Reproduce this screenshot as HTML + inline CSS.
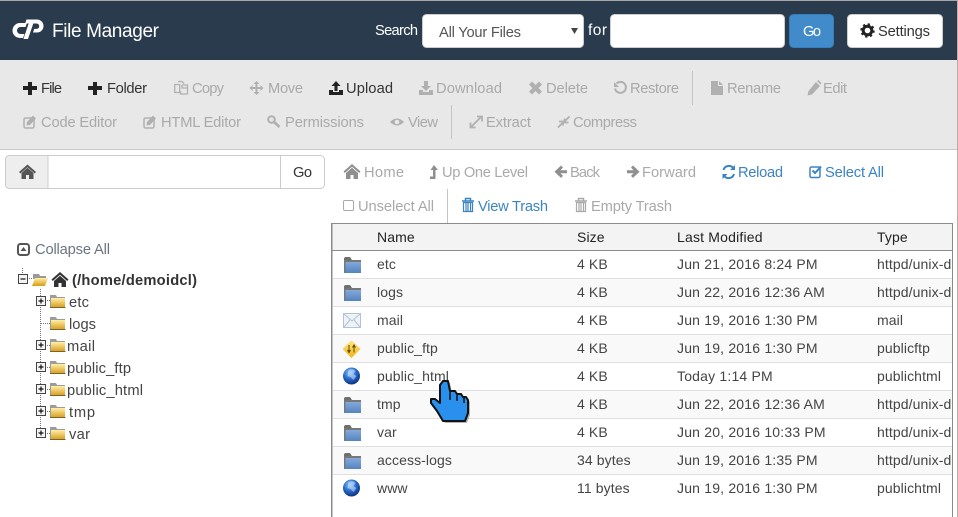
<!DOCTYPE html>
<html><head><meta charset="utf-8"><title>File Manager</title>
<style>
html,body{margin:0;padding:0;background:#fff;width:958px;height:517px;overflow:hidden}
svg{display:block}
text{font-family:"Liberation Sans",sans-serif;font-size:14px}
text[textLength]{font-size:14.7px}
.d{fill:#a9a9a9}.a{fill:#333}.b{fill:#3a83c4}.g{fill:#8f8f8f}
.t{fill:#444}
.i{fill:#b0b0b0}.ia{fill:#222}
.c1 text{letter-spacing:.1px}
.c3 text{letter-spacing:.19px}
</style></head><body>
<svg width="958" height="517" viewBox="0 0 958 517" xmlns="http://www.w3.org/2000/svg">
<defs>
<linearGradient id="fy" x1="0" y1="0" x2="0" y2="1"><stop offset="0" stop-color="#fff0a8"/><stop offset="1" stop-color="#d69a14"/></linearGradient>
<linearGradient id="fb" x1="0" y1="0" x2="0" y2="1"><stop offset="0" stop-color="#84a9da"/><stop offset="1" stop-color="#5583bf"/></linearGradient>
<radialGradient id="gl" cx=".4" cy=".3" r=".8"><stop offset="0" stop-color="#8cc4fa"/><stop offset=".5" stop-color="#2466c8"/><stop offset="1" stop-color="#0a2468"/></radialGradient>
<linearGradient id="dm" x1="0" y1="0" x2="0" y2="1"><stop offset="0" stop-color="#ffe98a"/><stop offset="1" stop-color="#f2b416"/></linearGradient>
<g id="tf">
<path d="M0 2 q0-2 2-2 h4 l2 3 h8 v3 h-16z" fill="#6f6f6f"/>
<rect x="0" y="3" width="17" height="13" fill="#777"/>
<rect x="1.500" y="5" width="15.500" height="11" fill="url(#fb)"/>
</g>
<g id="yf">
<path d="M0 0 h6 l1 2 h8 v11 h-15z" fill="#9c9c9c"/>
<rect x="1" y="3" width="14" height="10" fill="url(#fy)"/>
<rect x="0" y="12" width="15.500" height="1" fill="#7a6330"/>
</g>
<g id="pb">
<rect x=".5" y=".5" width="9" height="9" fill="#f4f4f4" stroke="#444"/>
<path d="M2.500 5h5M5 2.500v5" stroke="#111" stroke-width="1.200"/>
</g>
<g id="globe">
<circle cx="0" cy="0" r="8.500" fill="url(#gl)"/>
<path d="M-3-6 q5-2 7 1 l-2 3 l3 2 l-3 4 l-3-3 l-3-1 z" fill="#cfe6fb" opacity=".55"/>
</g>
</defs>

<rect width="958" height="517" fill="#fff"/>
<rect x="0" y="1" width="958" height="59" fill="#2a3b4d"/>
<rect x="0" y="0" width="958" height="1" fill="#a8a8a8"/>
<rect x="0" y="60" width="958" height="89" fill="#e8e8e8"/>
<rect x="0" y="149" width="958" height="1" fill="#c8c8c8"/>
<rect x="957" y="0" width="1" height="517" fill="#c9a8a0"/>

<!-- logo -->
<path fill="#fff" d="M27 23 h-7 a7.500 7.500 0 0 0 0 15 h3 l1.500-4 h-4 a3.500 3.500 0 0 1 0-7 h5z"/>
<path fill="#fff" d="M26.500 19.500 h10.500 a6.300 6.300 0 0 1 0 13 h-4 l1.300-3.600 h2.200 a2.600 2.600 0 0 0 0-5.400 h-3.200 l-5.300 15.500 h-4.600 l5.300-15.500 h-3.600z"/>
<text x="52" y="37" textLength="107" style="font-size:19px" fill="#fff">File Manager</text>
<text x="375" y="35" textLength="43" fill="#fff">Search</text>
<rect x="422.500" y="14.500" width="161" height="33" rx="4" fill="#fff" stroke="#ccc"/>
<text x="439" y="37" textLength="82" fill="#555">All Your Files</text>
<path d="M571 28h7l-3.500 6z" fill="#444"/>
<text x="588" y="35" textLength="19" fill="#fff" style="font-size:15.500px">for</text>
<rect x="610.500" y="14.500" width="174" height="33" rx="4" fill="#fff" stroke="#ccc"/>
<rect x="789.500" y="14.500" width="44" height="33" rx="4" fill="#428bca" stroke="#357ebd"/>
<text x="803" y="36" textLength="18" fill="#fff">Go</text>
<rect x="847.500" y="14.500" width="95" height="33" rx="4" fill="#fff" stroke="#ccc"/>
<circle cx="867.500" cy="30.500" r="4.300" fill="none" stroke="#222" stroke-width="3"/>
<circle cx="867.500" cy="30.500" r="6.300" fill="none" stroke="#222" stroke-width="1.800" stroke-dasharray="2.300 2.650"/>
<text x="878" y="36" textLength="52" fill="#333">Settings</text>

<!-- toolbar row 1 -->
<path d="M28 82h4v4h5v4h-5v5h-4v-5h-5v-4h5z" fill="#222"/>
<text x="41" y="93" textLength="21" class="a">File</text>
<path d="M93 82h4v4h5v4h-5v5h-4v-5h-5v-4h5z" fill="#222"/>
<text x="107" y="93" textLength="40" class="a">Folder</text>
<g fill="none" stroke="#b0b0b0" stroke-width="1.300"><path d="M174.700 84.500h5v8h-5zM178 81.500h4l2 2M182 85h5.500v9h-7v-3M182 85v3h5"/></g>
<text x="192" y="93" textLength="32" class="d">Copy</text>
<path class="i" d="M256.500 81l3 3h-2v3h3v-2l3 3-3 3v-2h-3v3h2l-3 3-3-3h2v-3h-3v2l-3-3 3-3v2h3v-3h-2z"/>
<text x="268" y="93" textLength="35" class="d">Move</text>
<path d="M336 81l4.500 5h-3v5h-3v-5h-3zM329 90h4v2h6v-2h4v5h-14z" fill="#222"/>
<text x="346" y="93" textLength="47" class="a">Upload</text>
<path class="i" d="M424 81h4v5h3l-5 5-5-5h3zM419 90h4v2h6v-2h4v5h-14z"/>
<text x="436" y="93" textLength="66" class="d">Download</text>
<path class="i" d="M532 81.500l3.500 3.500 3.500-3.500 3 3-3.500 3.500 3.500 3.500-3 3-3.500-3.500-3.500 3.500-3-3 3.500-3.500-3.500-3.500z"/>
<text x="546" y="93" textLength="42" class="d">Delete</text>
<path d="M616.500 83.500a5.500 5.500 0 1 1 -1.500 5" fill="none" stroke="#b0b0b0" stroke-width="2"/><path class="i" d="M614 82v5h5z"/>
<text x="630" y="93" textLength="49" class="d">Restore</text>
<rect x="692" y="71" width="1" height="34" fill="#c4c4c4"/>
<path class="i" d="M711 81h7v5h5v9h-12zM719 81l4 4h-4z"/>
<text x="727" y="93" textLength="54" class="d">Rename</text>
<path class="i" d="M816 82l4 4-8 8.500-4.500 1 1-4.500zM817 81l1.500-1 3 3-1 1.500z"/>
<text x="823" y="93" textLength="24" class="d">Edit</text>

<!-- toolbar row 2 -->
<g><rect x="24" y="118" width="10" height="10" rx="1.500" fill="none" stroke="#b0b0b0" stroke-width="1.500"/><path class="i" d="M33 115.500l3 3-6 6.500-3.500.5.500-3.500z"/></g>
<text x="41" y="127" textLength="76" class="d">Code Editor</text>
<g transform="translate(120,0)"><rect x="24" y="118" width="10" height="10" rx="1.500" fill="none" stroke="#b0b0b0" stroke-width="1.500"/><path class="i" d="M33 115.500l3 3-6 6.500-3.500.5.500-3.500z"/></g>
<text x="161" y="127" textLength="80" class="d">HTML Editor</text>
<circle cx="271.500" cy="119.500" r="3.300" fill="none" stroke="#b0b0b0" stroke-width="2"/><path d="M274 122l5.500 5" stroke="#b0b0b0" stroke-width="2.600"/>
<text x="285" y="127" textLength="79" class="d">Permissions</text>
<path class="i" d="M390 122q7-7 14 0q-7 7-14 0z"/><circle cx="397" cy="122" r="2.300" fill="#e8e8e8"/>
<text x="408" y="127" textLength="30" class="d">View</text>
<rect x="451" y="105" width="1" height="34" fill="#c4c4c4"/>
<path d="M471 127l10-10M477 116.500h5v5M470.500 122.500v5h5" fill="none" stroke="#b0b0b0" stroke-width="1.800"/>
<text x="486" y="127" textLength="45" class="d">Extract</text>
<path d="M558 127.500l4.500-4.500M569.500 116.500l-4.500 4.500M559 121.500h4v4M568.500 122.500h-4v-4" fill="none" stroke="#b0b0b0" stroke-width="1.800"/>
<text x="573" y="127" textLength="64" class="d">Compress</text>

<!-- path box -->
<rect x="5.500" y="155.500" width="319" height="33" rx="4" fill="#fff" stroke="#ccc"/>
<path d="M9.500 155.500h38.500v33h-38.500a4 4 0 0 1-4-4v-25a4 4 0 0 1 4-4z" fill="#eee" stroke="#ccc"/>
<rect x="280" y="156" width="1" height="32" fill="#ccc"/>
<path d="M27.500 164.500l8.500 7.500-1.300 1.500-7.200-6.300-7.200 6.300-1.300-1.500zM21.500 173l6-5.200 6 5.200v6h-4.500v-4h-3v4h-4.500z" fill="#555"/>
<text x="293" y="177" textLength="19" class="a">Go</text>

<!-- collapse -->
<rect x="18" y="244" width="11" height="11" rx="2.500" fill="none" stroke="#555" stroke-width="2"/>
<path d="M23.500 247l3 4h-6z" fill="#555"/>
<text x="35" y="254" textLength="75" fill="#6b7580">Collapse All</text>

<!-- tree -->
<path d="M22.500 268v6M27 278.500h5M40.500 289v143M45 300.500h5M41 323.500h9M45 345.500h5M45 367.500h5M45 389.500h5M45 411.500h5M45 433.500h5" fill="none" stroke="#777" stroke-dasharray="1 1"/>
<rect x="18.500" y="274.500" width="9" height="9" fill="#f4f4f4" stroke="#444"/><path d="M20.500 279h5" stroke="#111" stroke-width="1.200"/>
<path d="M33 274h6l1 2h6v3h-13z" fill="#999"/><path d="M35 278h13l-3 8h-13z" fill="url(#fy)"/>
<path d="M60 272l8.500 7.500-1.300 1.500-7.200-6.300-7.200 6.300-1.300-1.500zM54 281l6-5.200 6 5.200v6h-4.500v-4h-3v4h-4.500z" fill="#333"/>
<text x="72" y="285" textLength="125" font-weight="bold" fill="#333">(/home/demoidcl)</text>
<use href="#pb" x="36" y="296"/><use href="#yf" x="50" y="295"/><text x="69" y="307" textLength="20" class="t">etc</text>
<use href="#yf" x="50" y="317"/><text x="69" y="329" textLength="27" class="t">logs</text>
<use href="#pb" x="36" y="340"/><use href="#yf" x="50" y="339"/><text x="67" y="351" textLength="28" class="t">mail</text>
<use href="#pb" x="36" y="362"/><use href="#yf" x="50" y="361"/><text x="67" y="373" textLength="64" class="t">public_ftp</text>
<use href="#pb" x="36" y="384"/><use href="#yf" x="50" y="383"/><text x="67" y="395" textLength="76" class="t">public_html</text>
<use href="#pb" x="36" y="406"/><use href="#yf" x="50" y="405"/><text x="69" y="417" textLength="26" class="t">tmp</text>
<use href="#pb" x="36" y="428"/><use href="#yf" x="50" y="427"/><text x="69" y="439" textLength="21" class="t">var</text>

<!-- action row 1 -->
<path class="g" d="M352 164l8.500 7.500-1.300 1.500-7.200-6.300-7.200 6.300-1.300-1.500zM346 173l6-5.200 6 5.200v6h-4.500v-4h-3v4h-4.500z"/>
<text x="364" y="177" textLength="40" class="d">Home</text>
<path class="g" d="M434 165l4 5h-2.500v9h-5.500v-2.500h3v-6.500h-2.500z"/>
<text x="442" y="177" textLength="86" class="d">Up One Level</text>
<path class="g" d="M561 165.500l2 2-2.500 2.700h6.500v3h-6.500l2.500 2.700-2 2-6.500-6.200z"/>
<text x="570" y="177" textLength="30" class="d">Back</text>
<path class="g" d="M633 165.500l-2 2 2.500 2.700h-6.500v3h6.500l-2.500 2.700 2 2 6.500-6.200z"/>
<text x="642" y="177" textLength="54" class="d">Forward</text>
<path d="M723.500 170a5.500 5.500 0 0 1 10-1.500M734 174a5.500 5.500 0 0 1-10 1.500" fill="none" stroke="#3a83c4" stroke-width="2"/><path d="M735 165v5h-5zM722.500 179v-5h5z" fill="#3a83c4"/>
<text x="738" y="177" textLength="45" class="b">Reload</text>
<rect x="810" y="167" width="10" height="10.500" rx="1.500" fill="none" stroke="#3a83c4" stroke-width="1.500"/><path d="M812.500 170.500l2.500 2.500 6-6.500" fill="none" stroke="#3a83c4" stroke-width="2"/>
<text x="825" y="177" textLength="59" class="b">Select All</text>

<!-- action row 2 -->
<rect x="343.500" y="200.500" width="10" height="10" rx="1.500" fill="none" stroke="#a9a9a9"/>
<text x="358" y="211" textLength="76" class="d">Unselect All</text>
<rect x="447" y="189" width="1" height="34" fill="#c4c4c4"/>
<g fill="none" stroke="#3a83c4"><path d="M462 201h12M465.500 200.500v-2h5v2" stroke-width="1.500"/><path d="M463.500 202.500h9v9h-9zM466 203v8M468 203v8M470.500 203v8" stroke-width="1.200"/></g>
<text x="478" y="211" textLength="70" class="b">View Trash</text>
<g fill="none" stroke="#a9a9a9"><path d="M575 201h12M578.500 200.500v-2h5v2" stroke-width="1.500"/><path d="M576.500 202.500h9v9h-9zM579 203v8M581 203v8M583.500 203v8" stroke-width="1.200"/></g>
<text x="591" y="211" textLength="81" class="d">Empty Trash</text>

<!-- table -->
<rect x="331" y="223" width="622" height="1" fill="#8a8a8a"/>
<rect x="332" y="224" width="621" height="26" fill="#f3f3f3"/>
<rect x="331" y="250" width="622" height="1" fill="#8a8a8a"/>
<rect x="331" y="223" width="1.500" height="294" fill="#8a8a8a"/>
<rect x="952" y="223" width="1" height="294" fill="#8a8a8a"/>
<g fill="#f9f9f9"><rect x="333" y="279" width="619" height="27"/><rect x="333" y="335" width="619" height="27"/><rect x="333" y="391" width="619" height="27"/><rect x="333" y="447" width="619" height="27"/></g>
<g fill="#dfdfdf"><rect x="333" y="278" width="619" height="1"/><rect x="333" y="306" width="619" height="1"/><rect x="333" y="334" width="619" height="1"/><rect x="333" y="362" width="619" height="1"/><rect x="333" y="390" width="619" height="1"/><rect x="333" y="418" width="619" height="1"/><rect x="333" y="446" width="619" height="1"/><rect x="333" y="474" width="619" height="1"/></g>

<g fill="#222" class="c1"><text x="377" y="242">Name</text><text x="577" y="242">Size</text><text x="877" y="242">Type</text></g>
<g fill="#222" class="c3"><text x="677" y="242">Last Modified</text></g>

<use href="#tf" x="344" y="257"/><use href="#tf" x="344" y="285"/><use href="#tf" x="344" y="397"/><use href="#tf" x="344" y="425"/><use href="#tf" x="344" y="453"/>
<rect x="343.500" y="313.500" width="17" height="14" fill="#eef3fa" stroke="#b4c2d4"/><path d="M344 314l8 7 8-7M344 327l6-7M360 327l-6-7" fill="none" stroke="#b4c2d4"/>
<path d="M351.500 340l9 9-9 9-9-9z" fill="url(#dm)"/>
<path d="M349 345v7M347.500 350l1.500 2.500 1.500-2.500M354 352.500v-7M352.500 347.500l1.500-2.500 1.500 2.500" fill="none" stroke="#664400" stroke-width="1"/>
<use href="#globe" x="351.500" y="376"/><use href="#globe" x="351.500" y="488"/>

<g fill="#444" class="c1">
<text x="377" y="269">etc</text><text x="577" y="269">4 KB</text>
<text x="377" y="297">logs</text><text x="577" y="297">4 KB</text>
<text x="377" y="325">mail</text><text x="577" y="325">4 KB</text><text x="877" y="325">mail</text>
<text x="377" y="353">public_ftp</text><text x="577" y="353">4 KB</text><text x="877" y="353">publicftp</text>
<text x="377" y="381">public_html</text><text x="577" y="381">4 KB</text><text x="877" y="381">publichtml</text>
<text x="377" y="409">tmp</text><text x="577" y="409">4 KB</text>
<text x="377" y="437">var</text><text x="577" y="437">4 KB</text>
<text x="377" y="465">access-logs</text><text x="577" y="465">34 bytes</text>
<text x="377" y="493">www</text><text x="577" y="493">11 bytes</text><text x="877" y="493">publichtml</text>
<text x="877" y="269">httpd/unix-d</text><text x="877" y="297">httpd/unix-d</text><text x="877" y="409">httpd/unix-d</text><text x="877" y="437">httpd/unix-d</text><text x="877" y="465">httpd/unix-d</text>
</g>
<g fill="#444" class="c3">
<text x="677" y="269">Jun 21, 2016 8:24 PM</text>
<text x="677" y="297">Jun 22, 2016 12:36 AM</text>
<text x="677" y="325">Jun 19, 2016 1:30 PM</text>
<text x="677" y="353">Jun 19, 2016 1:30 PM</text>
<text x="677" y="381">Today 1:14 PM</text>
<text x="677" y="409">Jun 22, 2016 12:36 AM</text>
<text x="677" y="437">Jun 20, 2016 10:33 PM</text>
<text x="677" y="465">Jun 19, 2016 1:35 PM</text>
<text x="677" y="493">Jun 19, 2016 1:30 PM</text>
</g>

<!-- hand cursor -->
<path transform="translate(2,2)" fill="#777" opacity=".55" d="M443 381h5l2 10h5l2 3h4l2 3h3l2 3v13l-3 8h-22l-6-10-6-8v-4h4l5 4v-18z"/>
<path fill="#2a90ee" stroke="#111" stroke-width="2" stroke-linejoin="round" d="M443 381h5l2 10h5l2 3h4l2 3h3l2 3v13l-3 8h-22l-6-10-6-8v-4h4l5 4v-18z"/>
<path d="M450 392v8M457 395v6M464 398v5" stroke="#111" stroke-width="1.500" fill="none"/>
</svg>
</body></html>
